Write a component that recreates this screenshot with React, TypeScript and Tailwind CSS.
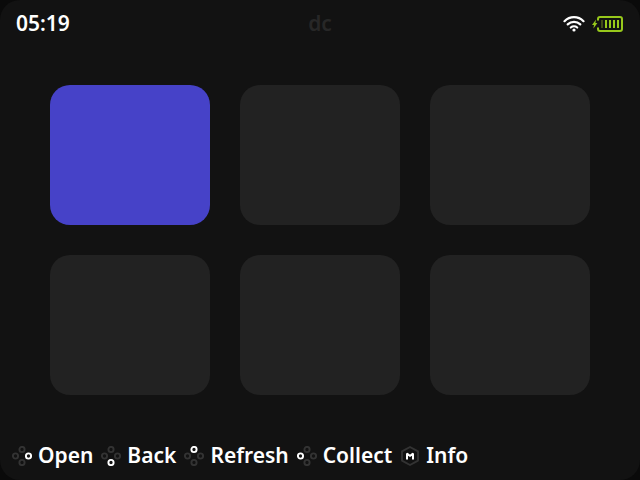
import React from 'react';

type Direction = 'up' | 'down' | 'left' | 'right';

interface Hint {
    label: string;
    button: Direction | 'menu';
}

const HINTS: Hint[] = [
    { label: 'Open', button: 'right' },
    { label: 'Back', button: 'down' },
    { label: 'Refresh', button: 'up' },
    { label: 'Collect', button: 'left' },
    { label: 'Info', button: 'menu' },
];

const DOTS: { direction: Direction; cx: number; cy: number }[] = [
    { direction: 'up', cx: 10, cy: 3.5 },
    { direction: 'left', cx: 3.5, cy: 10 },
    { direction: 'down', cx: 10, cy: 16.5 },
    { direction: 'right', cx: 16.5, cy: 10 },
];

const TILES = [0, 1, 2, 3, 4, 5];

const PadIcon: React.FC<{ active: Direction }> = ({ active }) => (
    <svg className="h-5 w-5 shrink-0" viewBox="0 0 20 20" fill="none" strokeWidth="1.9" aria-hidden="true">
        {DOTS.map(dot => (
            <circle
                key={dot.direction}
                cx={dot.cx}
                cy={dot.cy}
                r="2.6"
                stroke={dot.direction === active ? '#ffffff' : '#333333'}
            />
        ))}
    </svg>
);

const MenuIcon: React.FC = () => (
    <svg className="h-5 w-5 shrink-0" viewBox="0 0 20 20" fill="none" aria-hidden="true">
        <path d="M10 1L18 5.4V14.6L10 19L2 14.6V5.4Z" stroke="#333333" strokeWidth="1.9" strokeLinejoin="round" />
        <path d="M7 13.5V7.5L10 10L13 7.5V13.5" stroke="#ffffff" strokeWidth="2" strokeLinejoin="bevel" />
    </svg>
);

const WifiIcon: React.FC = () => (
    <svg className="h-4 w-[22px]" viewBox="0 0 22 16" fill="none" stroke="#ffffff" strokeWidth="2.2" strokeLinecap="round" aria-label="Wi-Fi connected">
        <path d="M1.5 5.2C6.8 -0.2 15.2 -0.2 20.5 5.2" />
        <path d="M4.7 8.4C8.2 5 13.8 5 17.3 8.4" />
        <path d="M7.8 11.5C9.6 9.9 12.4 9.9 14.2 11.5" />
        <circle cx="11" cy="14" r="1.6" fill="#ffffff" stroke="none" />
    </svg>
);

const BatteryIcon: React.FC = () => (
    <svg className="h-4 w-8" viewBox="0 0 32 16" fill="none" stroke="#97c81b" strokeWidth="2" aria-label="Battery charging">
        <path d="M6 4.5V3Q6 1 8 1H28Q30 1 30 3V13Q30 15 28 15H8Q6 15 6 13V11.5" />
        <path d="M4 3.4L0 9H2L1.4 12.6L5.4 7H3.4Z" fill="#97c81b" stroke="none" />
        <path d="M10 4V12" stroke="#3f4c17" strokeWidth="2" />
        <path d="M14 4V12M18 4V12M22 4V12M26 4V12" strokeWidth="2" />
    </svg>
);

export default function App() {
    return (
        <div className="min-h-screen bg-[#0a0a0a]">
            <div className="flex min-h-screen flex-col rounded-[20px] bg-[#121212] font-['Noto_Sans',sans-serif] text-[21px] font-semibold text-white">
                {/* Status bar */}
                <header className="grid h-12 grid-cols-3 items-center px-4">
                    <time>05:19</time>
                    <h1 className="text-center text-[#272727]">dc</h1>
                    <div className="flex items-center justify-end gap-[7px]">
                        <WifiIcon />
                        <BatteryIcon />
                    </div>
                </header>

                {/* Tiles */}
                <main className="flex flex-1 flex-col justify-center px-[50px]">
                    <div className="grid grid-cols-3 gap-[30px]">
                        {TILES.map(tile => (
                            <button
                                key={tile}
                                type="button"
                                aria-label={`Tile ${tile + 1}`}
                                className={`h-[140px] rounded-[20px] ${tile === 0 ? 'bg-[#4642c8]' : 'bg-[#222222]'}`}
                            />
                        ))}
                    </div>
                </main>

                {/* Button hints */}
                <footer className="flex h-12 items-center gap-2 px-3">
                    {HINTS.map(hint => (
                        <button key={hint.label} type="button" className="flex items-center gap-1.5">
                            {hint.button === 'menu' ? <MenuIcon /> : <PadIcon active={hint.button} />}
                            {hint.label}
                        </button>
                    ))}
                </footer>
            </div>
        </div>
    );
}
